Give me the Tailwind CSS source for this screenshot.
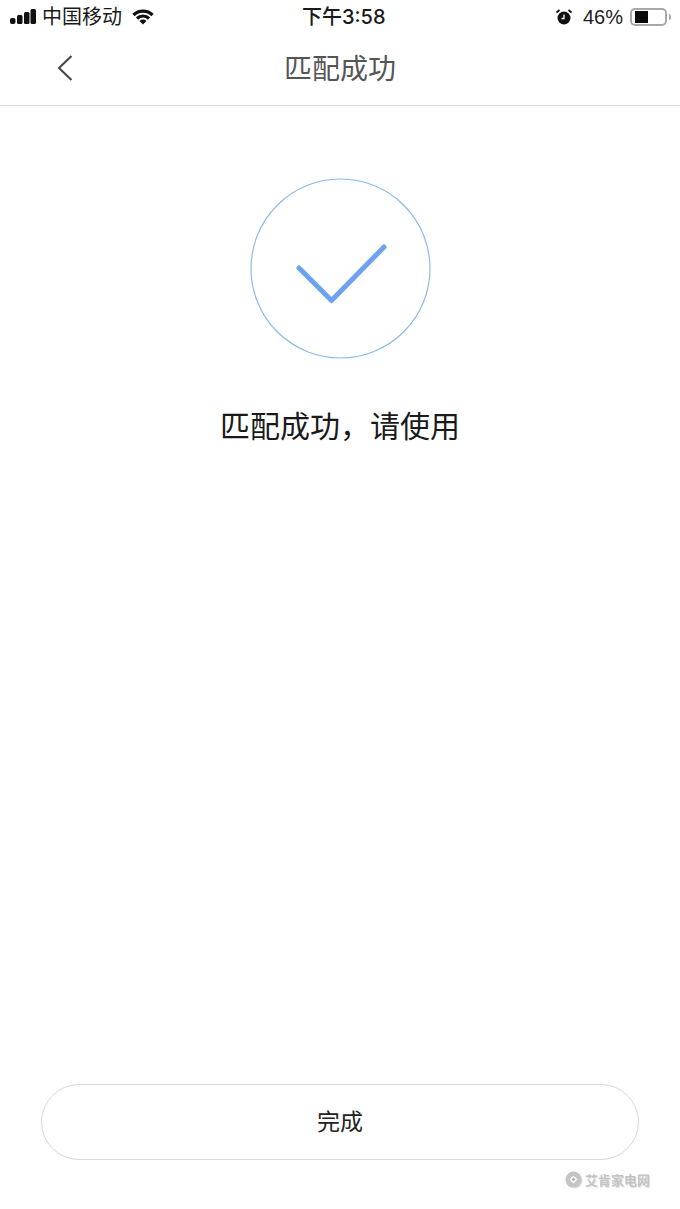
<!DOCTYPE html>
<html lang="zh-CN">
<head>
<meta charset="utf-8"/>
<meta content="width=device-width, initial-scale=1.0" name="viewport"/>
<title>匹配成功</title>
<script src="https://cdn.jsdelivr.net/npm/@tailwindcss/browser@4"></script>
</head>
<body class="bg-white">
<div class="relative flex flex-col w-[680px] h-[1209px] overflow-hidden bg-white font-['Liberation_Sans','Noto_Sans_CJK_SC',sans-serif]">
  <!-- status bar -->
  <div class="flex items-center h-[35px] pl-[10px] pr-[9px] pb-[2px] text-[#1a1a1a]">
    <div class="flex items-center w-[292px]">
      <svg class="w-[26px] h-[15px]" viewBox="0 0 26 15" fill="#111">
        <rect x="0" y="9" width="5.500" height="6" rx="2"/>
        <rect x="7" y="6" width="5.500" height="9" rx="1.500"/>
        <rect x="14" y="3" width="5.500" height="12" rx="1.500"/>
        <rect x="20.500" y="0" width="5.500" height="15" rx="1.500"/>
      </svg>
      <span class="ml-[6px] text-[20px] leading-none">中国移动</span>
      <svg class="ml-[9px] w-[24px] h-[16px]" viewBox="0 0 23 16" fill="none" stroke="#111" stroke-width="3.200">
        <path d="M1.950 6 A13.500 13.500 0 0 1 21.050 6"/>
        <path d="M5.500 9.500 A8.500 8.500 0 0 1 17.500 9.500"/>
        <path d="M8 12 A5 5 0 0 1 15 12 L11.500 15.500 Z" fill="#111" stroke="none"/>
      </svg>
    </div>
    <span class="text-[20px] leading-[24px] font-medium font-['Inter','Noto_Sans_CJK_SC',sans-serif]">下午3:58</span>
    <div class="flex items-center ml-auto">
      <svg class="w-[16px] h-[16px]" viewBox="0 0 16 16">
        <circle cx="8" cy="9" r="6.500" fill="#111"/>
        <path d="M8 5.500 V9.500 H5.500" fill="none" stroke="#fff" stroke-width="1.300"/>
        <path d="M0.500 3.500 L3.500 1 M15.500 3.500 L12.500 1" stroke="#111" stroke-width="1.800"/>
      </svg>
      <span class="ml-[11px] text-[20px] leading-none text-[#222]">46%</span>
      <div class="ml-[7px] flex items-center w-[37px] h-[18px] px-[3px] py-[1px] rounded-[5px] border-2 border-[#a8a8a8]">
        <div class="w-[13px] h-full bg-[#0a0a0a]"></div>
      </div>
      <div class="ml-[2px] w-[2px] h-[6px] rounded-r-sm bg-[#aaa]"></div>
    </div>
  </div>

  <!-- nav -->
  <div class="relative flex items-center justify-center h-[71px] border-b border-[#dcdcdc]">
    <svg class="absolute left-[57px] top-[20px] w-[16px] h-[26px]" viewBox="0 0 16 26" fill="none" stroke="#444" stroke-width="2">
      <path d="M14.500 1 L2 13 L14.500 25"/>
    </svg>
    <span class="text-[28px] leading-none text-[#555]">匹配成功</span>
  </div>

  <!-- result -->
  <div class="flex flex-col items-center flex-1 pt-[72px]">
    <svg class="w-[181px] h-[181px]" viewBox="0 0 181 181" fill="none">
      <circle cx="90.500" cy="90.500" r="89.500" stroke="#8db9ea" stroke-width="1.200"/>
      <path d="M49 90 L81.500 122.500 L134 69" stroke="#6da2ee" stroke-width="5" stroke-linecap="round" stroke-linejoin="round"/>
    </svg>
    <p class="mt-[50px] text-[30px] leading-[36px] text-[#1a1a1a]">匹配成功，请使用</p>
  </div>

  <!-- action -->
  <div class="px-[41px] pb-[49px]">
    <button class="flex items-center justify-center w-[598px] h-[76px] rounded-full border border-[#d8d8d8] bg-white text-[23px] text-[#222]">完成</button>
  </div>

  <!-- watermark -->
  <div class="absolute left-[565px] top-[1171px] flex items-center blur-[0.7px]">
    <svg class="w-[18px] h-[18px]" viewBox="0 0 18 18">
      <circle cx="9.500" cy="9.500" r="8" fill="#ddd"/>
      <circle cx="8.500" cy="8.500" r="8" fill="#c4c4c4"/>
      <path d="M4.500 8.500 L8.500 4.500 L12.500 8.500 L8.500 12.500 Z" fill="#fff"/>
      <path d="M6.500 8.500 L8.500 6.500 L10.500 8.500 L8.500 10.500 Z" fill="#b0b0b0"/>
    </svg>
    <span class="ml-[2px] text-[13px] leading-none font-bold text-[#c4c4c4] [text-shadow:1px_1px_1px_#ddd]">艾肯家电网</span>
  </div>
</div>
</body>
</html>
